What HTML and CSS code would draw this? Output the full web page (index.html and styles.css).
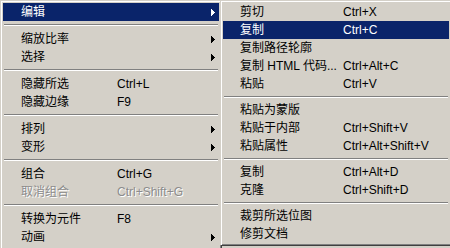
FILE: index.html
```html
<!DOCTYPE html>
<html>
<head>
<meta charset="utf-8">
<link rel="stylesheet" href="styles.css">
</head>
<body>
<div class="screen">
  <div class="menu menu-main">
    <div class="item active"><span class="label">编辑</span><span class="key"></span><span class="arrow"><svg width="4" height="7" viewBox="0 0 4 7"><polygon points="0,0 4,3.5 0,7"/></svg></span></div>
    <div class="sep"></div>
    <div class="item"><span class="label">缩放比率</span><span class="key"></span><span class="arrow"><svg width="4" height="7" viewBox="0 0 4 7"><polygon points="0,0 4,3.5 0,7"/></svg></span></div>
    <div class="item"><span class="label">选择</span><span class="key"></span><span class="arrow"><svg width="4" height="7" viewBox="0 0 4 7"><polygon points="0,0 4,3.5 0,7"/></svg></span></div>
    <div class="sep"></div>
    <div class="item"><span class="label">隐藏所选</span><span class="key">Ctrl+L</span><span class="arrow"></span></div>
    <div class="item"><span class="label">隐藏边缘</span><span class="key">F9</span><span class="arrow"></span></div>
    <div class="sep"></div>
    <div class="item"><span class="label">排列</span><span class="key"></span><span class="arrow"><svg width="4" height="7" viewBox="0 0 4 7"><polygon points="0,0 4,3.5 0,7"/></svg></span></div>
    <div class="item"><span class="label">变形</span><span class="key"></span><span class="arrow"><svg width="4" height="7" viewBox="0 0 4 7"><polygon points="0,0 4,3.5 0,7"/></svg></span></div>
    <div class="sep"></div>
    <div class="item"><span class="label">组合</span><span class="key">Ctrl+G</span><span class="arrow"></span></div>
    <div class="item disabled"><span class="label">取消组合</span><span class="key">Ctrl+Shift+G</span><span class="arrow"></span></div>
    <div class="sep"></div>
    <div class="item"><span class="label">转换为元件</span><span class="key">F8</span><span class="arrow"></span></div>
    <div class="item"><span class="label">动画</span><span class="key"></span><span class="arrow"><svg width="4" height="7" viewBox="0 0 4 7"><polygon points="0,0 4,3.5 0,7"/></svg></span></div>
    <div class="item"><span class="label">元件</span><span class="key"></span><span class="arrow"><svg width="4" height="7" viewBox="0 0 4 7"><polygon points="0,0 4,3.5 0,7"/></svg></span></div>
  </div>
  <div class="menu menu-sub">
    <div class="item"><span class="label">剪切</span><span class="key">Ctrl+X</span></div>
    <div class="item active"><span class="label">复制</span><span class="key">Ctrl+C</span></div>
    <div class="item"><span class="label">复制路径轮廓</span><span class="key"></span></div>
    <div class="item"><span class="label">复制 HTML 代码...</span><span class="key">Ctrl+Alt+C</span></div>
    <div class="item"><span class="label">粘贴</span><span class="key">Ctrl+V</span></div>
    <div class="sep"></div>
    <div class="item"><span class="label">粘贴为蒙版</span><span class="key"></span></div>
    <div class="item"><span class="label">粘贴于内部</span><span class="key">Ctrl+Shift+V</span></div>
    <div class="item"><span class="label">粘贴属性</span><span class="key">Ctrl+Alt+Shift+V</span></div>
    <div class="sep"></div>
    <div class="item"><span class="label">复制</span><span class="key">Ctrl+Alt+D</span></div>
    <div class="item"><span class="label">克隆</span><span class="key">Ctrl+Shift+D</span></div>
    <div class="sep"></div>
    <div class="item"><span class="label">裁剪所选位图</span><span class="key"></span></div>
    <div class="item"><span class="label">修剪文档</span><span class="key"></span></div>
  </div>
</div>
</body>
</html>
```

FILE: styles.css
```css
html, body {
  margin: 0;
  padding: 0;
  background: #d4d0c8;
  width: 450px;
  height: 248px;
  overflow: hidden;
}

.screen {
  display: flex;
  align-items: flex-start;
  font-family: "Liberation Sans", "Noto Sans CJK SC", sans-serif;
  font-size: 12px;
  color: #000;
}

.menu {
  flex-shrink: 0;
  box-sizing: border-box;
  background: #d4d0c8;
  border: 1px solid;
  border-color: #d4d0c8 #404040 #404040 #d4d0c8;
  box-shadow: inset 1px 1px 0 #ffffff, inset -1px -1px 0 #808080;
  padding: 2px;
}

.menu-main {
  width: 222px;
}

.menu-sub {
  width: 232px;
  margin-left: -2px;
  position: relative;
}

.item {
  display: flex;
  align-items: center;
  height: 18px;
  line-height: 18px;
  white-space: nowrap;
}

.menu-main .item {
  padding-left: 18px;
}

.menu-sub .item {
  padding-left: 17px;
}

.menu-main .label {
  width: 96px;
}

.menu-sub .label {
  width: 103px;
}

.key {
  flex: 1;
}

.arrow {
  width: 4px;
  height: 7px;
  margin-right: 4px;
  display: flex;
}

.arrow svg {
  display: block;
  fill: #000;
  shape-rendering: crispEdges;
}

.item.active {
  background: #0a246a;
  color: #fff;
}

.item.active .arrow svg {
  fill: #fff;
}

.item.disabled {
  color: #8c8c8c;
  text-shadow: 1px 1px 0 #ffffff;
}

.sep {
  height: 2px;
  margin: 3px 1px 4px;
  border-top: 1px solid #808080;
  border-bottom: 1px solid #ffffff;
  box-sizing: border-box;
}

.menu-sub .sep {
  margin: 3px 1px 3px;
}
```
